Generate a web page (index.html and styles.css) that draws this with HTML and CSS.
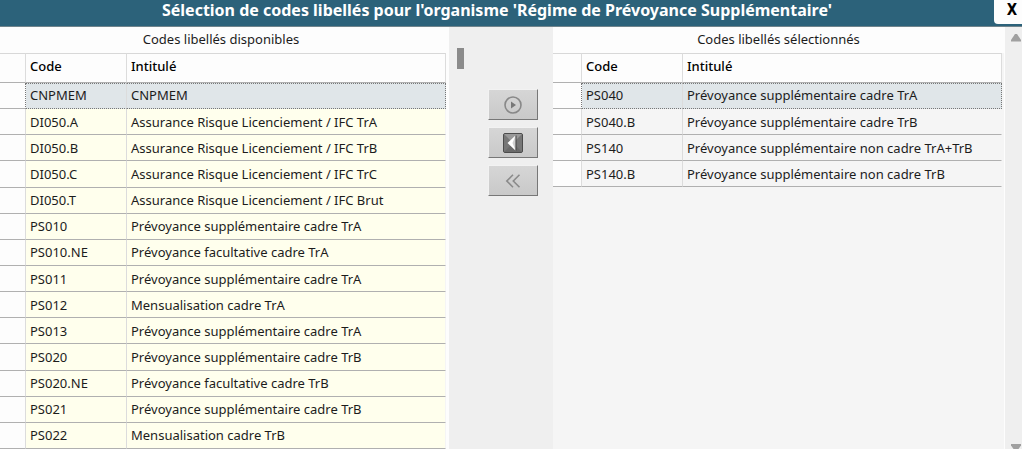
FILE: index.html
```
<!DOCTYPE html>
<html lang="fr">
<head>
<meta charset="utf-8">
<title>Sélection de codes libellés</title>
<link rel="stylesheet" href="styles.css">
</head>
<body>
<header class="titlebar">
  <h1 class="title">Sélection de codes libellés pour l'organisme 'Régime de Prévoyance Supplémentaire'</h1>
  <button class="close" type="button" aria-label="Fermer">X</button>
</header>
<main class="content">
  <section class="panel available">
    <h2 class="caption" id="cap-available">Codes libellés disponibles</h2>
    <table class="codes fill" aria-labelledby="cap-available">
      <thead><tr><th class="marker"></th><th class="code">Code</th><th>Intitulé</th></tr></thead>
      <tbody>
        <tr class="selected"><td></td><td>CNPMEM</td><td>CNPMEM</td></tr>
        <tr><td></td><td>DI050.A</td><td>Assurance Risque Licenciement / IFC TrA</td></tr>
        <tr><td></td><td>DI050.B</td><td>Assurance Risque Licenciement / IFC TrB</td></tr>
        <tr><td></td><td>DI050.C</td><td>Assurance Risque Licenciement / IFC TrC</td></tr>
        <tr><td></td><td>DI050.T</td><td>Assurance Risque Licenciement / IFC Brut</td></tr>
        <tr><td></td><td>PS010</td><td>Prévoyance supplémentaire cadre TrA</td></tr>
        <tr><td></td><td>PS010.NE</td><td>Prévoyance facultative cadre TrA</td></tr>
        <tr><td></td><td>PS011</td><td>Prévoyance supplémentaire cadre TrA</td></tr>
        <tr><td></td><td>PS012</td><td>Mensualisation cadre TrA</td></tr>
        <tr><td></td><td>PS013</td><td>Prévoyance supplémentaire cadre TrA</td></tr>
        <tr><td></td><td>PS020</td><td>Prévoyance supplémentaire cadre TrB</td></tr>
        <tr><td></td><td>PS020.NE</td><td>Prévoyance facultative cadre TrB</td></tr>
        <tr><td></td><td>PS021</td><td>Prévoyance supplémentaire cadre TrB</td></tr>
        <tr><td></td><td>PS022</td><td>Mensualisation cadre TrB</td></tr>
      </tbody>
    </table>
  </section>
  <div class="transfer">
    <div class="thumb"></div>
    <div class="actions">
      <button class="action" type="button" aria-label="Ajouter">
        <svg width="18" height="18" viewBox="0 0 18 18"><circle cx="9" cy="9" r="8" fill="none" stroke="#888" stroke-width="1.6"/><path d="M7 5.5v7l5-3.5z" fill="#777"/></svg>
      </button>
      <button class="action" type="button" aria-label="Retirer">
        <svg width="20" height="20" viewBox="0 0 20 20"><rect x=".5" y=".5" width="19" height="19" rx="1.5" fill="#777" stroke="#4c4c4c"/><path d="M1 1h18l-9 9z" fill="#999"/><path d="M1 19h18l-9-9z" fill="#6a6a6a"/><path d="M4.500 10 12.500 2.500v15z" fill="#fff"/><path d="M9.500 10 12.500 2.500v15z" fill="#d0d0d0"/><path d="M13 2.500v15" stroke="#444"/></svg>
      </button>
      <button class="action" type="button" aria-label="Tout retirer">
        <svg width="16" height="14" viewBox="0 0 16 14"><path d="M8 .8 1.800 7 8 13.200M14.500.8 8.300 7l6.200 6.200" fill="none" stroke="#8a8a8a" stroke-width="1.600"/></svg>
      </button>
    </div>
  </div>
  <section class="panel chosen">
    <h2 class="caption" id="cap-chosen">Codes libellés sélectionnés</h2>
    <table class="codes" aria-labelledby="cap-chosen">
      <thead><tr><th class="marker"></th><th class="code">Code</th><th>Intitulé</th></tr></thead>
      <tbody>
        <tr class="selected"><td></td><td>PS040</td><td>Prévoyance supplémentaire cadre TrA</td></tr>
        <tr><td></td><td>PS040.B</td><td>Prévoyance supplémentaire cadre TrB</td></tr>
        <tr><td></td><td>PS140</td><td>Prévoyance supplémentaire non cadre TrA+TrB</td></tr>
        <tr><td></td><td>PS140.B</td><td>Prévoyance supplémentaire non cadre TrB</td></tr>
      </tbody>
    </table>
  </section>
  <div class="scrollbar">
    <svg width="10" height="8" viewBox="0 0 10 8"><path d="M0 7.500V6L4 0h2l4 6v1.500z" fill="#a0a0a0"/></svg>
    <svg width="10" height="5" viewBox="0 0 10 5"><path d="M0 0h10v1.500L7.500 5h-5L0 1.500z" fill="#a0a0a0"/></svg>
  </div>
</main>
</body>
</html>
```
FILE: styles.css
```
* { box-sizing: border-box; }
body {
  margin: 0;
  min-height: 100vh;
  display: flex;
  flex-direction: column;
  background: #efefef;
  color: #1c1c1c;
  font: 13px/18px "Noto Sans", "Open Sans", sans-serif;
}
.titlebar {
  display: flex;
  height: 27px;
  background: #2c627a;
  border-bottom: 1px solid #70848c;
}
.title {
  flex: 1;
  margin: 0;
  text-align: center;
  white-space: nowrap;
  color: #fff;
  font: bold 16px/20px "Noto Sans", "Open Sans", sans-serif;
}
.close {
  width: 28px;
  height: 24px;
  padding: 0 0 4px 8px;
  border: 0;
  border-bottom-left-radius: 4px;
  background: #fdfdfd;
  color: #000;
  font: bold 15px/20px "DejaVu Sans Condensed", "DejaVu Sans", sans-serif;
}
.content {
  flex: 1;
  display: grid;
  grid-template-columns: 449fr 104px 452fr 17px;
}
.panel {
  display: flex;
  flex-direction: column;
  border-right: 1px solid #fdfdfd;
  background: #f5f5f5;
}
.caption {
  margin: 0;
  padding: 3px 6px 5px 0;
  background: #fdfdfd;
  text-align: center;
  font-size: 13px;
  line-height: 18px;
  font-weight: 400;
}
.available { padding-right: 2px; background: #fdfdfd; }
.available .caption { padding-right: 4px; }
.chosen { padding-right: 2px; }
.chosen .caption { padding-right: 0; margin-right: -2px; }
.codes {
  width: 100%;
  table-layout: fixed;
  border-collapse: separate;
  border-spacing: 0;
}
.fill { flex: 1; }
.marker { width: 26px; }
.chosen .marker { width: 29px; }
.code { width: 101px; }
.codes th, .codes td {
  height: 26px;
  padding: 0 4px;
  text-align: left;
  white-space: nowrap;
  border-right: 1px solid #dcdcdc;
  border-bottom: 1px solid #b0b0b0;
}
.codes th {
  height: 30px;
  padding-bottom: 4px;
  border-top: 1px solid #d8d8d8;
  background: #fdfdfd;
  font-weight: 500;
  color: #000;
}
.codes td:first-child { background: #fdfdfd; }
.available td { background: #ffffed; }
.chosen td { background: #f5f5f5; }
.codes td:last-child { border-right-color: #f5f5f5; }
.codes .selected td { background: #e0e6e9; padding-bottom: 2px; }
.codes td:first-child,
.codes .selected td:first-child { background: #fdfdfd; }
.codes .selected td:first-child { border-right: 1px dotted #777; }
.codes .selected td:not(:first-child) {
  border-top: 1px dotted #777;
  border-bottom: 1px dotted #777;
}
.codes .selected td:last-child { border-right: 1px dotted #777; }
.transfer {
  display: flex;
  align-items: flex-start;
  padding: 21px 15px 0 8px;
}
.thumb { width: 7px; height: 21px; background: #8b8b8b; }
.actions {
  display: flex;
  flex-direction: column;
  gap: 7px;
  margin: 41px 0 0 auto;
}
.action {
  display: grid;
  place-items: center;
  width: 50px;
  height: 31px;
  padding: 0;
  border: 1px solid #f2f2f2;
  border-right-color: #777;
  border-bottom-color: #777;
  background: linear-gradient(#d6d6d6, #c9c9c9);
}
.scrollbar {
  display: flex;
  flex-direction: column;
  justify-content: space-between;
  align-items: center;
  padding: 7px 0 0 4px;
  background: #efefef;
}
```
